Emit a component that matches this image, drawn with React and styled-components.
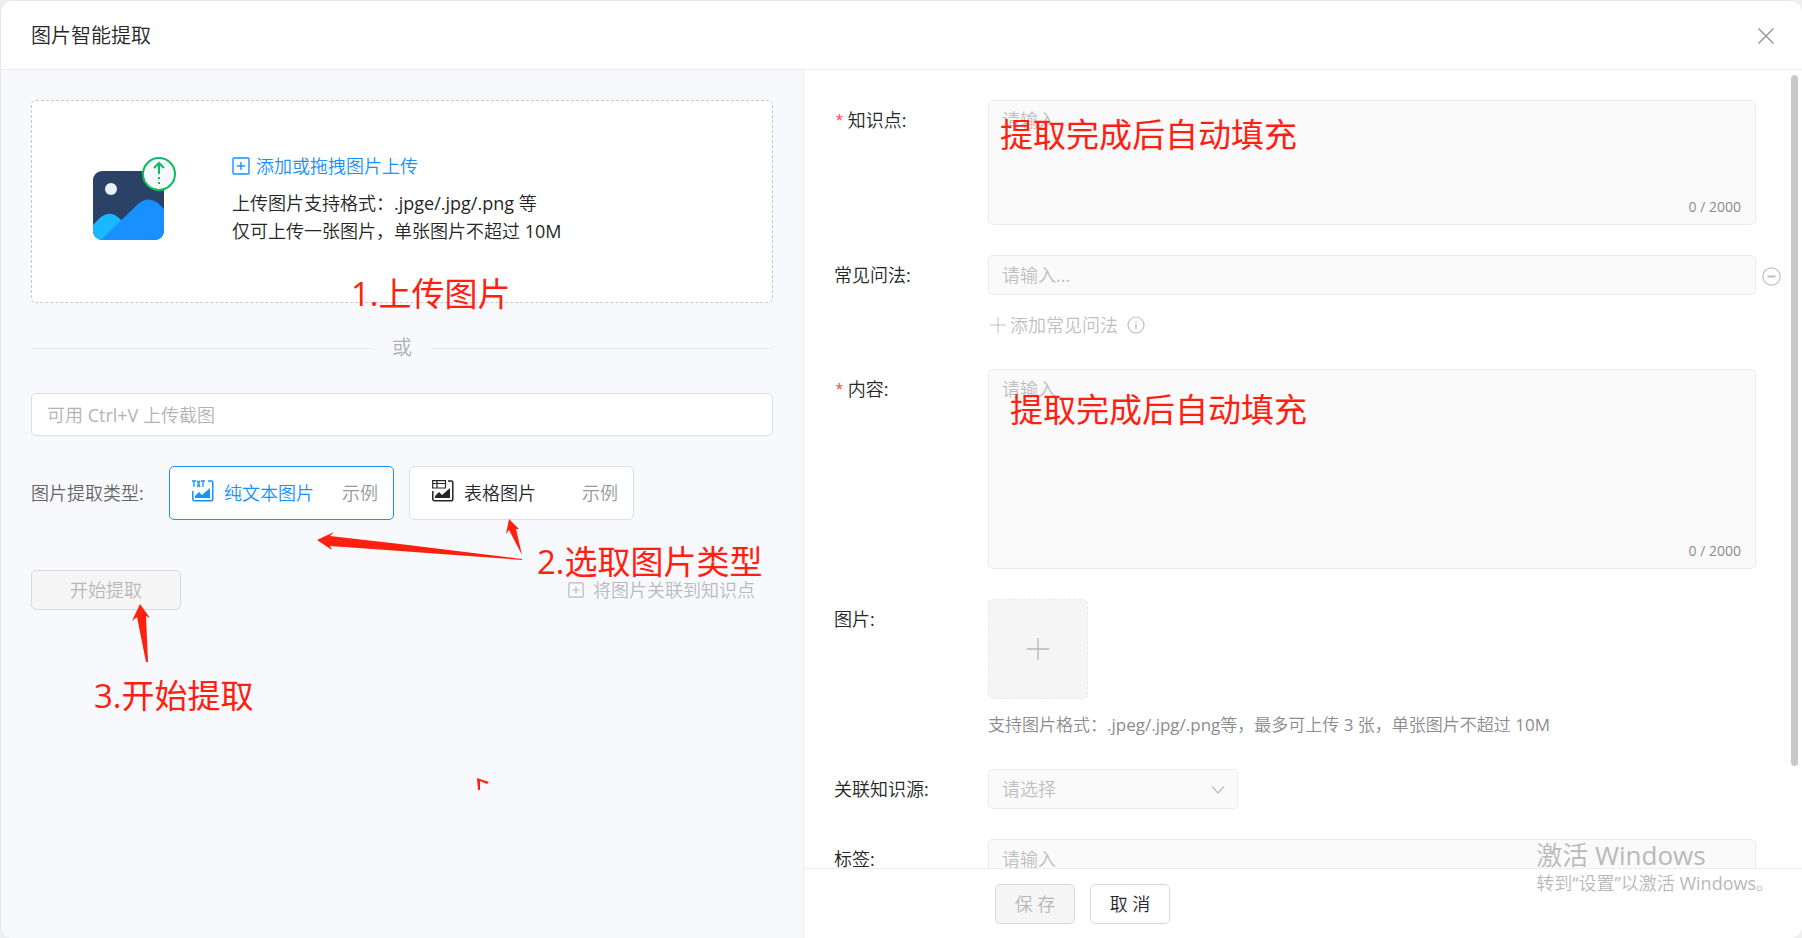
import styled, { createGlobalStyle } from "styled-components";

const GlobalStyle = createGlobalStyle`
  * {
    box-sizing: border-box;
  }
  body {
    margin: 0;
    background-color: #f0f0f0;
  }
  body, input, textarea, select, button {
    font-family: "Open Sans", "Noto Sans CJK SC DemiLight", "Noto Sans CJK SC", sans-serif;
    font-size: 18px;
    font-weight: 400;
    line-height: 28px;
  }
`;

const Modal = styled.div`
  height: 100vh;
  display: flex;
  flex-direction: column;
  overflow: hidden;
  color: #262626;
  background-color: #ffffff;
  border: 1px solid #e6e6e6;
  border-right: none;
  border-bottom: none;
  border-radius: 12px;
`;

const Header = styled.header`
  height: 69px;
  flex-shrink: 0;
  display: flex;
  align-items: center;
  justify-content: space-between;
  padding: 2px 28px 0 30px;
  border-bottom: 1px solid #ebedf0;
`;

const Title = styled.h1`
  margin: 0;
  font-size: 20px;
  font-weight: 400;
`;

const IconButton = styled.button`
  display: flex;
  padding: 0;
  color: #999999;
  background: none;
  border: none;
  cursor: pointer;
`;

const Main = styled.main`
  flex: 1;
  min-height: 0;
  display: grid;
  grid-template-columns: 802fr 999fr;
`;

const LeftPanel = styled.section`
  position: relative;
  display: flex;
  flex-direction: column;
  gap: 30px;
  padding: 30px;
  background-color: #f8f9fd;
`;

const DropZone = styled.div`
  height: 203px;
  display: flex;
  align-items: center;
  gap: 55px;
  padding: 0 60px 6px;
  background-color: #ffffff;
  border: 1px dashed #c4c6cc;
  border-radius: 5px;
`;

const DropText = styled.div`
  display: flex;
  flex-direction: column;
`;

const UploadButton = styled.button`
  display: flex;
  align-items: center;
  gap: 6px;
  margin-bottom: 9px;
  padding: 0;
  color: #1890ff;
  background: none;
  border: none;
  cursor: pointer;
`;

const Divider = styled.div`
  display: flex;
  align-items: center;
  gap: 20px;
  font-size: 20px;
  line-height: 30px;
  color: #b0b0b0;

  &::before,
  &::after {
    content: "";
    flex: 1;
    border-top: 1px solid #ebedf0;
  }
`;

const PasteInput = styled.input`
  width: 100%;
  height: 43px;
  padding: 0 15px;
  background-color: #ffffff;
  border: 1px solid #dcdee0;
  border-radius: 5px;
  outline: none;

  &::placeholder {
    color: #b3b3b3;
    opacity: 1;
  }
`;

const TypeRow = styled.div`
  display: flex;
  align-items: center;
  gap: 15px;
`;

const TypeLabel = styled.span`
  width: 123px;
  color: #666666;
  white-space: nowrap;
`;

const TypeCard = styled.div`
  width: 225px;
  height: 54px;
  display: flex;
  align-items: center;
  justify-content: space-between;
  padding: 0 15px 0 22px;
  color: ${(props) => (props.$active ? "#1890ff" : "#262626")};
  background-color: #ffffff;
  border: 1px solid ${(props) => (props.$active ? "#1890ff" : "#dcdee0")};
  border-radius: 5px;
`;

const TypeOption = styled.label`
  display: flex;
  align-items: center;
  gap: 10px;
  cursor: pointer;

  svg {
    margin-bottom: 5px;
  }
`;

const HiddenInput = styled.input`
  position: absolute;
  opacity: 0;
  pointer-events: none;
`;

const ExampleLink = styled.a`
  color: #999999;
  text-decoration: none;
`;

const ActionRow = styled.div`
  display: flex;
  align-items: center;
  justify-content: space-between;
  margin-top: 20px;
  padding-right: 18px;
`;

const Button = styled.button`
  width: ${(props) => props.$width || 80}px;
  height: 40px;
  padding: 0;
  color: #262626;
  background-color: #ffffff;
  border: 1px solid #d9d9d9;
  border-radius: 5px;
  cursor: pointer;

  &:disabled {
    color: #b8b8b8;
    background-color: #f5f5f5;
    cursor: not-allowed;
  }
`;

const LinkImageButton = styled.button`
  display: flex;
  align-items: center;
  gap: 9px;
  padding: 0;
  color: #b8babd;
  background: none;
  border: none;
`;

const RightPanel = styled.section`
  position: relative;
  min-height: 0;
  display: flex;
  flex-direction: column;
  border-left: 1px solid #ebedf0;
`;

const FormBody = styled.div`
  position: relative;
  flex: 1;
  min-height: 0;
  overflow: hidden;
`;

const ScrollThumb = styled.div`
  position: absolute;
  top: 5px;
  right: 4px;
  width: 7px;
  height: calc(87% - 3px);
  background-color: #c9c9c9;
  border-radius: 4px;
`;

const Form = styled.form`
  display: flex;
  flex-direction: column;
  gap: 30px;
  padding: 30px 46px 30px 30px;
`;

const FormRow = styled.div`
  display: flex;
  align-items: flex-start;
`;

const Label = styled.label`
  width: 154px;
  flex-shrink: 0;
  line-height: 40px;
`;

const Required = styled.span`
  margin-right: 3px;
  font-family: "Liberation Mono", monospace;
  color: #ff4d4f;
`;

const Field = styled.div`
  position: relative;
  flex: 1;
  min-width: 0;
  display: flex;
  flex-direction: column;
`;

const TextArea = styled.textarea`
  display: block;
  width: 100%;
  height: ${(props) => props.$height}px;
  padding: 5px 13px;
  background-color: #fafafa;
  border: 1px solid #ebebeb;
  border-radius: 5px;
  resize: none;

  &::placeholder {
    color: #bfbfbf;
    opacity: 1;
  }
`;

const Counter = styled.span`
  position: absolute;
  right: 15px;
  bottom: 4px;
  font-size: 14px;
  color: #8c8c8c;
`;

const TextInput = styled.input`
  width: 100%;
  height: 40px;
  padding: 0 13px;
  background-color: #fafafa;
  border: 1px solid #ebebeb;
  border-radius: 5px;

  &::placeholder {
    color: #bfbfbf;
    opacity: 1;
  }
`;

const RemoveButton = styled(IconButton)`
  position: absolute;
  top: 12px;
  right: -25px;
  color: #bfbfbf;
`;

const AddRow = styled.div`
  display: flex;
  align-items: center;
  gap: 9px;
  margin-top: 16px;
  padding-left: 2px;
  color: #bfbfbf;
`;

const AddButton = styled(IconButton)`
  align-items: center;
  gap: 4px;
  color: #bfbfbf;
`;

const PictureButton = styled.button`
  width: 100px;
  height: 100px;
  display: flex;
  align-items: center;
  justify-content: center;
  padding: 0;
  color: #b8b8b8;
  background-color: #f5f5f5;
  border: 1px dashed #ebebeb;
  border-radius: 5px;
`;

const Note = styled.p`
  margin: 12px 0 0;
  font-size: 17px;
  color: #8c8c8c;
`;

const SelectWrap = styled.div`
  position: relative;
  width: 250px;

  svg {
    position: absolute;
    top: 16px;
    right: 13px;
    pointer-events: none;
  }
`;

const Select = styled.select`
  width: 100%;
  height: 40px;
  padding: 0 13px;
  color: #bfbfbf;
  background-color: #fafafa;
  border: 1px solid #ebebeb;
  border-radius: 5px;
  appearance: none;
  opacity: 1;
`;

const Footer = styled.footer`
  height: 70px;
  flex-shrink: 0;
  display: flex;
  gap: 15px;
  padding: 15px 0 0 191px;
  border-top: 1px solid #ebedf0;
`;

const Annotation = styled.span`
  position: absolute;
  left: ${(props) => props.$left}px;
  top: ${(props) => props.$top}px;
  font-family: "Open Sans", "Noto Sans CJK SC", sans-serif;
  font-size: 33px;
  line-height: 40px;
  color: #ff2010;
  white-space: nowrap;
  pointer-events: none;
`;

const Arrows = styled.svg`
  position: absolute;
  left: 0;
  top: 0;
  pointer-events: none;
`;

const Watermark = styled.div`
  position: absolute;
  right: 28px;
  bottom: 41px;
  color: #b9b9b9;
  white-space: nowrap;
  pointer-events: none;
`;

const WatermarkTitle = styled.div`
  font-size: 26px;
`;

const UploadPicture = () => (
  <svg width="85" height="86" viewBox="0 0 85 86" aria-hidden="true">
    <defs>
      <clipPath id="picture-frame">
        <rect x="1" y="15" width="71" height="69" rx="9" />
      </clipPath>
    </defs>
    <g clipPath="url(#picture-frame)">
      <rect x="1" y="15" width="71" height="69" fill="#294266" />
      <path d="M0 70 9 61Q18 54 27 62L40 75V86H0Z" fill="#1ab8ff" />
      <path d="M7 86 45 49Q55 39 66 47L74 55V86Z" fill="#1890ff" />
    </g>
    <circle cx="19" cy="33" r="6" fill="#edf0f8" />
    <circle cx="67" cy="18" r="16" fill="#f8f9fd" stroke="#0abf5b" strokeWidth="2" />
    <path d="M62 12 67 7 72 12M67 8V18M67 21V23M67 26V28" fill="none" stroke="#0abf5b" strokeWidth="2" />
  </svg>
);

const PlusSquare = ({ size }) => (
  <svg width={size} height={size} viewBox="0 0 18 18" fill="none" stroke="currentColor" aria-hidden="true">
    <rect x="1" y="1" width="16" height="16" rx="1" strokeWidth="1.4" />
    <path d="M5 9H13M9 5V13" strokeWidth="1.4" />
  </svg>
);

const PictureTypeIcon = ({ table }) => (
  <svg width="22" height="22" viewBox="0 0 22 22" fill="none" stroke="currentColor" aria-hidden="true">
    {table ? (
      <path d="M.7.7H13.5V8H.7ZM.7 3.5H13.5M5 .7V8" strokeWidth="1.2" />
    ) : (
      <path d="M0 1H4M2 1V7M5.2 .4 8 7M8 .4 5.2 7M9 1H13M11 1V7" strokeWidth="1.3" />
    )}
    <path d="M16 1H19.5Q20.8 1 20.8 2.5V19Q20.8 20.8 19 20.8H2.5Q.8 20.8 .8 19V11" strokeWidth="1.5" />
    <path d="M3 18V16L7 12 10 15 18 8V18Z" fill="currentColor" stroke="none" />
  </svg>
);

const PlusIcon = ({ size }) => (
  <svg width={size} height={size} viewBox="0 0 16 16" stroke="currentColor" aria-hidden="true">
    <path d="M0 8H16M8 0V16" />
  </svg>
);

const InfoIcon = () => (
  <svg width="18" height="18" viewBox="0 0 18 18" fill="none" stroke="currentColor" aria-hidden="true">
    <circle cx="9" cy="9" r="8" strokeWidth="1.2" />
    <path d="M9 8V13M9 5V6.4" strokeWidth="1.3" />
  </svg>
);

const App = () => {
  return (
    <>
      <GlobalStyle />
      <Modal>
        <Header>
          <Title>图片智能提取</Title>
          <IconButton aria-label="关闭">
            <svg width="16" height="16" viewBox="0 0 16 16" stroke="currentColor" strokeWidth="1.5">
              <path d="M.5.5 15.5 15.5M15.5.5.5 15.5" />
            </svg>
          </IconButton>
        </Header>
        <Main>
          <LeftPanel>
            <DropZone>
              <UploadPicture />
              <DropText>
                <UploadButton>
                  <PlusSquare size={18} />
                  添加或拖拽图片上传
                </UploadButton>
                <span>上传图片支持格式：.jpge/.jpg/.png 等</span>
                <span>仅可上传一张图片，单张图片不超过 10M</span>
              </DropText>
            </DropZone>
            <Divider>或</Divider>
            <PasteInput aria-label="上传截图" placeholder="可用 Ctrl+V 上传截图" />
            <TypeRow>
              <TypeLabel>图片提取类型:</TypeLabel>
              <TypeCard $active>
                <TypeOption>
                  <HiddenInput type="radio" name="type" defaultChecked />
                  <PictureTypeIcon />
                  纯文本图片
                </TypeOption>
                <ExampleLink href="#text-example">示例</ExampleLink>
              </TypeCard>
              <TypeCard>
                <TypeOption>
                  <HiddenInput type="radio" name="type" />
                  <PictureTypeIcon table />
                  表格图片
                </TypeOption>
                <ExampleLink href="#table-example">示例</ExampleLink>
              </TypeCard>
            </TypeRow>
            <ActionRow>
              <Button $width={150} disabled>
                开始提取
              </Button>
              <LinkImageButton disabled>
                <PlusSquare size={16} />
                将图片关联到知识点
              </LinkImageButton>
            </ActionRow>
            <Arrows width="802" height="868" viewBox="1 70 802 868" fill="#ff2010">
              <path d="M317 540 334 532 330 536 400 544 522 559V560L400 551 330 546 332 550Z" />
              <path d="M509 519 519 529 516 529 522 555 509 530 506 534Z" />
              <path d="M140 604 150 618 146 616 148 662H146L137 617 132 621Z" />
              <path d="M477 778 489 782 487 784 480 781 480 790H478Z" />
            </Arrows>
            <Annotation $left={350} $top={204}>1.上传图片</Annotation>
            <Annotation $left={536} $top={472}>2.选取图片类型</Annotation>
            <Annotation $left={93} $top={606}>3.开始提取</Annotation>
          </LeftPanel>
          <RightPanel>
            <FormBody>
              <Form>
                <FormRow>
                  <Label htmlFor="point">
                    <Required>*</Required>知识点:
                  </Label>
                  <Field>
                    <TextArea id="point" $height={125} placeholder="请输入" disabled />
                    <Counter>0 / 2000</Counter>
                    <Annotation $left={12} $top={15}>提取完成后自动填充</Annotation>
                  </Field>
                </FormRow>
                <FormRow>
                  <Label htmlFor="question">常见问法:</Label>
                  <Field>
                    <TextInput id="question" placeholder="请输入..." disabled />
                    <RemoveButton type="button" aria-label="删除">
                      <svg width="19" height="19" viewBox="0 0 19 19" fill="none" stroke="currentColor">
                        <circle cx="9.5" cy="9.5" r="8.7" strokeWidth="1.2" />
                        <path d="M5.5 9.5H13.5" strokeWidth="2" />
                      </svg>
                    </RemoveButton>
                    <AddRow>
                      <AddButton type="button">
                        <PlusIcon size={16} />
                        添加常见问法
                      </AddButton>
                      <InfoIcon />
                    </AddRow>
                  </Field>
                </FormRow>
                <FormRow>
                  <Label htmlFor="content">
                    <Required>*</Required>内容:
                  </Label>
                  <Field>
                    <TextArea id="content" $height={200} placeholder="请输入" disabled />
                    <Counter>0 / 2000</Counter>
                    <Annotation $left={22} $top={21}>提取完成后自动填充</Annotation>
                  </Field>
                </FormRow>
                <FormRow>
                  <Label htmlFor="picture">图片:</Label>
                  <Field>
                    <PictureButton id="picture" type="button" aria-label="上传图片" disabled>
                      <PlusIcon size={22} />
                    </PictureButton>
                    <Note>支持图片格式：.jpeg/.jpg/.png等，最多可上传 3 张，单张图片不超过 10M</Note>
                  </Field>
                </FormRow>
                <FormRow>
                  <Label htmlFor="source">关联知识源:</Label>
                  <SelectWrap>
                    <Select id="source" disabled>
                      <option>请选择</option>
                    </Select>
                    <svg width="14" height="10" viewBox="0 0 14 10" fill="none" stroke="#bfbfbf" strokeWidth="1.5">
                      <path d="M1 1.5 7 8 13 1.5" />
                    </svg>
                  </SelectWrap>
                </FormRow>
                <FormRow>
                  <Label htmlFor="tag">标签:</Label>
                  <Field>
                    <TextInput id="tag" placeholder="请输入" disabled />
                  </Field>
                </FormRow>
              </Form>
              <ScrollThumb />
            </FormBody>
            <Footer>
              <Button disabled>保 存</Button>
              <Button>取 消</Button>
            </Footer>
            <Watermark>
              <WatermarkTitle>激活 Windows</WatermarkTitle>
              <div>转到“设置”以激活 Windows。</div>
            </Watermark>
          </RightPanel>
        </Main>
      </Modal>
    </>
  );
};

export default App;
